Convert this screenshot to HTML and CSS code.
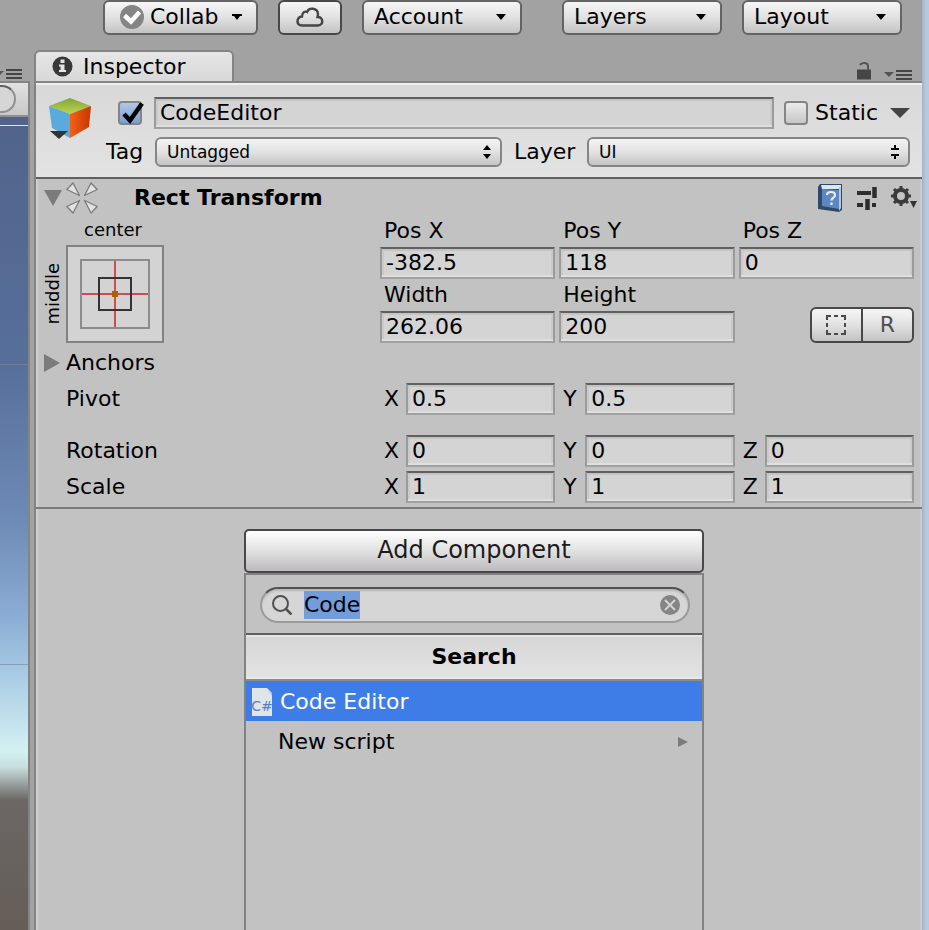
FILE: index.html
```html
<!DOCTYPE html>
<html lang="en">
<head>
<meta charset="utf-8">
<meta name="viewport" content="width=device-width, initial-scale=1">
<title>Inspector</title>
<link rel="stylesheet" href="styles.css">
</head>
<body>
<div class="editor">
  <header class="toolbar">
    <button class="tool tool-collab" type="button">
      <svg width="24" height="24" viewBox="0 0 24 24" aria-hidden="true"><circle cx="12" cy="12" r="12" fill="#858585"/><path d="M4.500 10.500L11 16.500 19.500 7" fill="none" stroke="#fff" stroke-width="4.500"/></svg>
      <span>Collab</span>
      <svg class="caret" width="10" height="6" viewBox="0 0 10 6" aria-hidden="true"><path d="M0 0h10v2H8L5 6 2 2H0z"/></svg>
    </button>
    <button class="tool tool-cloud" type="button" aria-label="Cloud services">
      <svg width="28" height="20" viewBox="0 0 28 20" aria-hidden="true"><path d="M6 18.500C-.5 18.500.5 10 6 9.500 6 5 9 4 11 5c2-5 10.500-4.500 11 2 0 1-.2 2-.5 3 6-.5 6.500 8.500.5 8.500z" fill="none" stroke="#454545" stroke-width="2.400"/></svg>
    </button>
    <button class="tool tool-menu" type="button"><span>Account</span><svg class="caret" width="10" height="6" viewBox="0 0 10 6" aria-hidden="true"><path d="M0 0h10L5 6z"/></svg></button>
    <button class="tool tool-menu tool-layers" type="button"><span>Layers</span><svg class="caret" width="10" height="6" viewBox="0 0 10 6" aria-hidden="true"><path d="M0 0h10L5 6z"/></svg></button>
    <button class="tool tool-menu" type="button"><span>Layout</span><svg class="caret" width="10" height="6" viewBox="0 0 10 6" aria-hidden="true"><path d="M0 0h10L5 6z"/></svg></button>
  </header>

  <div class="workspace">
    <section class="scene" aria-label="Scene view">
      <div class="scene-tabs">
        <svg width="22" height="12" viewBox="0 0 22 12" aria-hidden="true"><path d="M-5 3h9L0 7z" fill="#555"/><path d="M6 2h16M6 6h16M6 10h16" stroke="#454545" stroke-width="2"/></svg>
      </div>
      <div class="scene-bar"><div class="scene-search"></div></div>
      <div class="scene-sky"></div>
    </section>

    <main class="inspector">
      <div class="tabs">
        <div class="tab">
          <svg width="21" height="21" viewBox="0 0 21 21" aria-hidden="true"><circle cx="10.500" cy="10.500" r="10" fill="#383838"/><path d="M8.500 3.500h4v3.500h-4zM7 8.500h5.500V14H14v2H7v-2h1.500v-3.500H7z" fill="#e4e4e4"/></svg>
          <h1>Inspector</h1>
        </div>
        <div class="tab-tools">
          <svg width="16" height="20" viewBox="0 0 16 20" aria-hidden="true"><path d="M1 8.500h14v10H1z" fill="#454545"/><path d="M12 9V5Q12 2 8 2 5 2 4 4" fill="none" stroke="#555" stroke-width="2"/></svg>
          <svg width="28" height="12" viewBox="0 0 28 12" aria-hidden="true"><path d="M0 3h10L5 8z" fill="#555"/><path d="M12 2h16M12 6h16M12 10h16" stroke="#454545" stroke-width="2"/></svg>
        </div>
      </div>

      <div class="panel">
        <section class="object">
          <svg class="cube" width="44" height="44" viewBox="0 0 44 44" aria-hidden="true">
            <defs>
              <linearGradient id="top" x1="0" y1="0" x2="0" y2="1"><stop offset="0" stop-color="#7fa63c"/><stop offset="1" stop-color="#bcd64c"/></linearGradient>
              <linearGradient id="side" x1="0" y1="0" x2="1" y2="0"><stop offset="0" stop-color="#f2621a"/><stop offset="1" stop-color="#c93400"/></linearGradient>
            </defs>
            <path d="M1 9L22 1l21 8-21 8z" fill="url(#top)"/>
            <path d="M1 9l21 8v24L4 31z" fill="#5aabdb"/>
            <path d="M43 9l-21 8v24l19-11z" fill="url(#side)"/>
            <path d="M2 34h18l-9 8z" fill="#333"/>
          </svg>
          <div class="object-row">
            <span class="tick"><input class="check check-on" type="checkbox" checked aria-label="Active"><svg width="30" height="26" viewBox="0 0 30 26" aria-hidden="true"><path d="M6 14l6 6.500L24 3.500" fill="none" stroke="#000" stroke-width="4.500"/></svg></span>
            <input class="field name" type="text" value="CodeEditor" aria-label="Name">
            <input class="check" id="static" type="checkbox">
            <label for="static">Static</label>
            <button class="arrow" type="button" aria-label="Static options"><svg width="20" height="10" viewBox="0 0 20 10" aria-hidden="true"><path d="M0 0h20l-10 10z" fill="#444"/></svg></button>
          </div>
          <div class="object-row">
            <label class="tag-label" for="tag">Tag</label>
            <span class="pick pick-tag"><select id="tag"><option>Untagged</option></select><svg width="8" height="14" viewBox="0 0 8 14" aria-hidden="true"><path d="M0 5l4-5 4 5zM0 9h8l-4 5z"/></svg></span>
            <label class="layer-label" for="layer">Layer</label>
            <span class="pick pick-layer"><select id="layer"><option>UI</option></select><svg width="8" height="14" viewBox="0 0 8 14" aria-hidden="true"><path d="M3 0h2v3h3v2H0V3h3zM0 9h8v2H5v3H3v-3H0z"/></svg></span>
          </div>
        </section>

        <section class="component">
          <div class="component-head">
            <svg width="18" height="16" viewBox="0 0 18 16" aria-hidden="true"><path d="M0 0h18L9 16z" fill="#7b7b7b"/></svg>
            <svg class="rect-icon" width="32" height="32" viewBox="0 0 32 32" fill="#e2e2e2" stroke="#7b7b7b" stroke-width="1.300" stroke-linejoin="round" aria-hidden="true"><path d="M.8 7.500L7 1l6.500 12.500z"/><path d="M31.200 7.500L25 1l-6.500 12.500z"/><path d="M.8 24.500L7 31l6.500-12.500z"/><path d="M31.200 24.500L25 31l-6.500-12.500z"/></svg>
            <h2>Rect Transform</h2>
            <div class="component-tools">
              <svg width="26" height="28" viewBox="0 0 26 28" aria-hidden="true"><path d="M3 0h22v26l-3 2-21-3V3z" fill="#2f486b"/><path d="M4 1h20v4H5z" fill="#dce6ef"/><path d="M22 3h2v21l-2 3z" fill="#b7c8da"/><path d="M5 5l17 1v19L5 22z" fill="#5c88bf"/><path d="M10 11q0-3 4-3 4 0 4 3 0 2-2 3-1.500 1-1.500 2.500M14.500 18.500V21" fill="none" stroke="#e7eff8" stroke-width="2.200"/></svg>
              <svg width="20" height="24" viewBox="0 0 20 24" aria-hidden="true"><path d="M0 7h14M0 19h6M15 19h4" stroke="#2d2d2d" stroke-width="4"/><path d="M17.500 1v11M10.500 13v11" stroke="#2d2d2d" stroke-width="4.500"/></svg>
              <svg width="27" height="24" viewBox="0 0 27 24" aria-hidden="true"><circle cx="10" cy="10" r="6" fill="none" stroke="#3a3a3a" stroke-width="4"/><path d="M10 0v4M10 16v4M0 10h4M16 10h4M3 3l3 3M14 14l3 3M17 3l-3 3M6 14l-3 3" stroke="#3a3a3a" stroke-width="3"/><path d="M19 15h7l-3.500 7z" fill="#333"/></svg>
            </div>
          </div>

          <div class="position">
            <div class="anchor">
              <span class="anchor-x">center</span>
              <span class="anchor-y">middle</span>
              <button class="anchor-box" type="button" aria-label="Anchor presets">
                <svg width="94" height="94" viewBox="0 0 94 94" aria-hidden="true"><rect x="13" y="13" width="68" height="68" fill="none" stroke="#8c8c8c" stroke-width="2"/><path d="M47 14v66M14 47h66" stroke="#d14d4d" stroke-width="2"/><rect x="31" y="31" width="32" height="32" fill="none" stroke="#333" stroke-width="2"/><path d="M44 44h6v6h-6z" fill="#a56600"/></svg>
              </button>
            </div>
            <label for="pos-x">Pos X</label><label for="pos-y">Pos Y</label><label for="pos-z">Pos Z</label>
            <input class="field" id="pos-x" value="-382.5"><input class="field" id="pos-y" value="118"><input class="field" id="pos-z" value="0">
            <label for="width">Width</label><label for="height">Height</label><span></span>
            <input class="field" id="width" value="262.06"><input class="field" id="height" value="200">
            <div class="modes">
              <button type="button" aria-label="Blueprint mode"><svg width="20" height="20" viewBox="0 0 20 20" aria-hidden="true"><path d="M1 5V1h4M8 1h4M15 1h4v4M19 8v4M19 15v4h-4M12 19H8M5 19H1v-4M1 12V8" fill="none" stroke="#4a4a4a" stroke-width="2"/></svg></button>
              <button type="button">R</button>
            </div>
          </div>

          <div class="foldout">
            <svg width="16" height="18" viewBox="0 0 16 18" aria-hidden="true"><path d="M0 0l16 9-16 9z" fill="#7b7b7b"/></svg>
            <span>Anchors</span>
          </div>

          <div class="vector pivot">
            <span class="vector-name">Pivot</span>
            <label>X<input class="field" value="0.5"></label>
            <label>Y<input class="field" value="0.5"></label>
          </div>
          <div class="vector">
            <span class="vector-name">Rotation</span>
            <label>X<input class="field" value="0"></label>
            <label>Y<input class="field" value="0"></label>
            <label>Z<input class="field" value="0"></label>
          </div>
          <div class="vector">
            <span class="vector-name">Scale</span>
            <label>X<input class="field" value="1"></label>
            <label>Y<input class="field" value="1"></label>
            <label>Z<input class="field" value="1"></label>
          </div>
        </section>

        <section class="add">
          <button class="add-button" type="button">Add Component</button>
          <div class="popup">
            <div class="search-row">
              <div class="search">
                <svg width="20" height="20" viewBox="0 0 20 20" aria-hidden="true"><circle cx="8.500" cy="8.500" r="7.500" fill="none" stroke="#505050" stroke-width="2"/><path d="M13.500 13.500l6 6" stroke="#505050" stroke-width="2.500"/></svg>
                <input id="search" type="text" value="Code" aria-label="Search components">
                <button type="button" aria-label="Clear search"><svg width="20" height="20" viewBox="0 0 20 20" aria-hidden="true"><circle cx="10" cy="10" r="10" fill="#858585"/><path d="M5 5l10 10M15 5L5 15" stroke="#d4d4d4" stroke-width="2"/></svg></button>
              </div>
            </div>
            <h2 class="popup-title">Search</h2>
            <button class="item item-selected" type="button">
              <svg width="20" height="28" viewBox="0 0 20 28" aria-hidden="true"><path d="M0 0h15l5 5v23H0z" fill="#dfe5e8"/><path d="M15 0l5 5v3z" fill="#b4c0c8"/><text class="badge-text" x="10" y="23" text-anchor="middle">C#</text></svg>
              <span>Code Editor</span>
            </button>
            <button class="item" type="button">
              <span class="item-plain">New script</span>
              <svg width="10" height="10" viewBox="0 0 10 10" aria-hidden="true"><path d="M0 0l10 5-10 5z" fill="#7b7b7b"/></svg>
            </button>
          </div>
        </section>
      </div>
    </main>
  </div>
</div>
<div class="window-edge"></div>
<script src="search.js"></script>
</body>
</html>
```
FILE: styles.css
```css
* {
  box-sizing: border-box;
}

body {
  margin: 0;
  min-height: 100vh;
  display: flex;
  background: #a2a2a2;
  color: #000;
  font: 22px/32px "DejaVu Sans", Verdana, sans-serif;
}

button,
input,
select {
  margin: 0;
  padding: 0;
  border: 0;
  border-radius: 0;
  background: none;
  color: inherit;
  font: inherit;
  appearance: none;
  outline: 0;
}

h1,
h2 {
  margin: 0;
  font-size: 22px;
}

h1 {
  font-weight: normal;
}

svg {
  display: block;
  flex: none;
}

.editor {
  flex: 1;
  min-width: 0;
  display: flex;
  flex-direction: column;
}

.window-edge {
  width: 7px;
  background: linear-gradient(90deg, #a5b3c8, #b8c8dd 4px);
}

/* Toolbar */

.toolbar {
  height: 50px;
  padding-right: 20px;
  display: flex;
  justify-content: flex-end;
  align-items: flex-start;
  gap: 20px;
}

.tool {
  height: 35px;
  padding-bottom: 2px;
  display: flex;
  align-items: center;
  justify-content: space-between;
  border: 2px solid #646464;
  border-radius: 6px;
  background: linear-gradient(#f6f6f6, #e2e1e2 50%, #c4c2c4);
}

.tool-collab {
  width: 155px;
  padding: 0 14px 2px 15px;
  gap: 6px;
}

.tool-collab .caret {
  margin-left: auto;
}

.tool-cloud {
  width: 64px;
  justify-content: center;
  border-color: #484848;
}

.tool-menu {
  width: 160px;
  padding: 0 14px 2px 10px;
}

.tool-layers {
  margin-left: 20px;
}

/* Workspace */

.workspace {
  flex: 1;
  display: flex;
  gap: 4px;
}

.scene {
  width: 30px;
  display: flex;
  flex-direction: column;
}

.scene-tabs {
  height: 33px;
  padding-top: 18px;
  border-bottom: 2px solid #848484;
}

.scene-bar {
  height: 34px;
  padding: 2px 0;
  border-right: 2px solid #848484;
  border-bottom: 2px solid #909090;
  background: linear-gradient(#e2e2e2, #c8c8c8);
}

.scene-search {
  width: 16px;
  height: 28px;
  border: 2px solid #909090;
  border-top-color: #606060;
  border-left: 0;
  border-radius: 0 14px 14px 0;
  background: #d6d6d6;
}

.scene-sky {
  flex: 1;
  border-right: 2px solid #848484;
  background:
    linear-gradient(#dce2ea, #dce2ea) 0 8px / 100% 1px no-repeat,
    linear-gradient(#6e7f96, #6e7f96) 0 30.400% / 100% 1px no-repeat,
    linear-gradient(#86a0b8, #86a0b8) 0 67.400% / 100% 1px no-repeat,
    linear-gradient(#51638b, #566f99 30%, #6d89b5 49%, #8aabd2 61%, #a2c4e2 67%, #d4f1f2 78%, #c8dcdc 80%, #6c6765 84%, #645d58);
}

/* Inspector */

.inspector {
  flex: 1;
  min-width: 0;
  display: flex;
  flex-direction: column;
}

.tabs {
  height: 31px;
  display: flex;
  justify-content: space-between;
  align-items: flex-end;
}

.tab {
  width: 200px;
  height: 31px;
  padding-left: 16px;
  display: flex;
  align-items: center;
  gap: 10px;
  border: 2px solid #848484;
  border-bottom: 0;
  border-radius: 6px 6px 0 0;
  background: linear-gradient(#e6e6e6, #d8d8d8);
}

.tab-tools {
  padding-right: 10px;
  display: flex;
  align-items: flex-end;
  gap: 12px;
}

.panel {
  flex: 1;
  display: flex;
  flex-direction: column;
  border-top: 2px solid #848484;
  border-left: 2px solid #828282;
  background: #c2c2c2;
  box-shadow: inset 2px 0 #d0d0d0, inset -2px 0 #cacaca;
}

.object {
  padding: 12px 12px 10px;
  display: grid;
  grid-template-columns: 58px 1fr;
  row-gap: 8px;
  border-top: 2px solid #eee;
  border-bottom: 2px solid #606060;
  background: linear-gradient(#d8d8d8, #e3e3e3);
}

.cube {
  grid-row: span 2;
}

.object-row {
  height: 32px;
  display: flex;
  align-items: center;
}

.object-row + .object-row {
  height: 30px;
}

.field {
  width: 100%;
  min-width: 0;
  height: 32px;
  padding: 0 4px;
  border: 2px solid #9b9b9b;
  border-top-color: #606060;
  border-bottom-color: #a2a2a2;
  background: #d4d4d4;
  box-shadow: inset 0 2px #c4c4c4, inset 0 -2px #dfdfdf, inset 2px 0 #cacaca, inset -2px 0 #cacaca;
}

.name {
  flex: 1;
  margin: 0 10px 0 12px;
}

.check {
  width: 24px;
  height: 24px;
  border: 2px solid #858585;
  border-radius: 4px;
  background: linear-gradient(#ececec, #c8c6c8);
}

.check-on {
  background: linear-gradient(#b0c8e8, #7d9fd0);
}

.tick {
  position: relative;
  height: 24px;
  margin-left: 12px;
  display: flex;
}

.tick svg {
  position: absolute;
  left: 0;
  top: -1px;
  pointer-events: none;
}

.check + label {
  margin: 0 12px 0 7px;
}

.tag-label {
  width: 49px;
}

.pick {
  position: relative;
  height: 30px;
}

.pick-tag {
  flex: 347;
}

.pick-layer {
  flex: 323;
}

.layer-label {
  width: 85px;
  padding-left: 12px;
}

.pick select {
  width: 100%;
  height: 30px;
  padding: 0 10px;
  display: block;
  border: 2px solid #868686;
  border-radius: 6px;
  background: linear-gradient(#f4f4f4, #e2e2e2 50%, #c6c4c6);
  font-size: 17px;
  line-height: 26px;
}

.pick svg {
  position: absolute;
  right: 11px;
  top: 8px;
  pointer-events: none;
}

/* Rect Transform */

.component {
  padding-bottom: 4px;
  border-bottom: 2px solid #7b7b7b;
}

.component-head {
  height: 36px;
  padding: 2px 4px 0 8px;
  display: flex;
  align-items: center;
}

.rect-icon {
  margin: 0 36px 0 4px;
}

.component-tools {
  margin-left: auto;
  display: flex;
  align-items: center;
  gap: 14px;
}

.position,
.vector {
  padding-right: 8px;
  display: grid;
  grid-template-columns: 340px 1fr 1fr 1fr;
  column-gap: 4px;
}

.position {
  grid-auto-rows: 32px;
}

.position > label {
  padding-left: 4px;
}

.anchor {
  grid-row: span 4;
  display: grid;
  grid-template: 30px 98px / 26px 98px;
  column-gap: 4px;
  justify-items: center;
  align-items: center;
  font-size: 18px;
}

.anchor-x {
  grid-column: 2;
  padding-right: 4px;
}

.anchor-y {
  line-height: 26px;
  margin-left: 8px;
  writing-mode: vertical-rl;
  transform: rotate(180deg);
}

.anchor-box {
  border: 2px solid #828282;
  background: #d3d3d3;
}

.modes {
  height: 36px;
  width: 104px;
  display: flex;
  justify-self: end;
  align-self: end;
  border: 2px solid #484848;
  border-radius: 6px;
  background: linear-gradient(#f6f6f6, #e2e1e2 50%, #c4c2c4);
  color: #505050;
  font-size: 22px;
}

.modes button {
  flex: 1;
  display: flex;
  align-items: center;
  justify-content: center;
}

.modes button + button {
  border-left: 2px solid #484848;
}

.foldout {
  height: 40px;
  padding-left: 8px;
  display: flex;
  align-items: center;
  gap: 6px;
}

.vector {
  margin-bottom: 4px;
}

.vector:last-child {
  margin-bottom: 0;
}

.pivot {
  margin-bottom: 20px;
}

.vector-name {
  padding-left: 30px;
}

.vector label {
  padding-left: 4px;
  display: grid;
  grid-template-columns: 22px 1fr;
}

/* Add Component */

.add {
  flex: 1;
  width: 100%;
  max-width: 470px;
  margin: 0 auto;
  padding: 20px 10px 0 0;
  display: flex;
  flex-direction: column;
}

.add-button {
  height: 44px;
  padding-bottom: 2px;
  border: 2px solid #484848;
  border-radius: 5px;
  background: linear-gradient(#fff, #e2e1e2 50%, #bcbabc);
  color: #1c1c1c;
  font-size: 24px;
  line-height: 36px;
}

.popup {
  flex: 1;
  display: flex;
  flex-direction: column;
  border: 2px solid #828282;
  border-bottom: 0;
}

.search-row {
  padding: 12px 12px 10px 14px;
}

.search {
  height: 36px;
  padding: 0 8px 0 10px;
  display: flex;
  align-items: center;
  gap: 12px;
  border: 2px solid #9b9b9b;
  border-top-color: #505050;
  border-radius: 18px;
  background: #d6d6d6;
  box-shadow: inset 0 2px 2px #b8b8b8;
}

.search input {
  flex: 1;
  min-width: 0;
  height: 28px;
}

.search input::selection {
  background: #739cdb;
  color: #000;
}

.popup-title {
  height: 48px;
  border-top: 2px solid #606060;
  border-bottom: 2px solid #8c8c8c;
  background: linear-gradient(#d6d6d6, #e3e3e3);
  box-shadow: inset 0 2px #e6e6e6, inset 0 -2px #e8e8e8;
  line-height: 44px;
  text-align: center;
}

.item {
  height: 40px;
  padding: 2px 14px 0 6px;
  display: flex;
  align-items: center;
  gap: 8px;
}

.item-selected {
  background: #3e7de7;
  color: #fff;
}

.item-plain {
  margin: 0 auto 0 26px;
}

.badge-text {
  fill: #5b7fc4;
  font-size: 14px;
}
```
FILE: search.js
```js
const search = document.getElementById("search");
search.focus();
search.select();
```
